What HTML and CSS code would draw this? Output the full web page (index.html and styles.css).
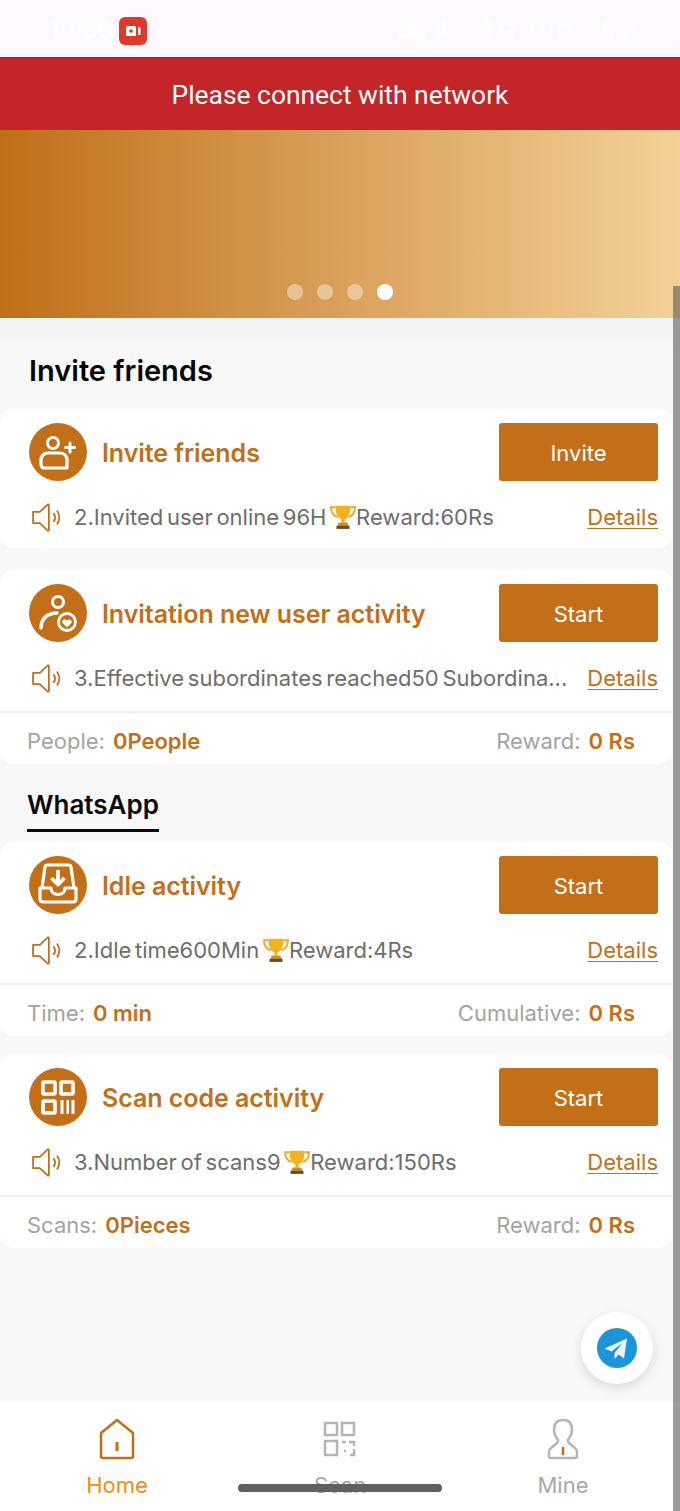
FILE: index.html
```html
<!DOCTYPE html>
<html lang="en">
<head>
<meta charset="utf-8">
<title>Invite friends</title>
<link rel="stylesheet" href="styles.css">
</head>
<body>
<svg class="defs" width="0" height="0" aria-hidden="true">
  <defs>
    <symbol id="spk" viewBox="0 0 30 30">
      <path d="M2 9.500h6.500L16 2.500c.7-.5 1.300-.2 1.300.6v23.800c0 .8-.6 1.100-1.300.6L8.500 20.500H2z" fill="none" stroke="#c36f17" stroke-width="1.700" stroke-linejoin="round"/>
      <path d="M22 11.500c1.600 2 1.600 5 0 7M25.500 9c2.400 3.500 2.400 8.500 0 12" fill="none" stroke="#c36f17" stroke-width="1.800" stroke-linecap="round"/>
    </symbol>
    <symbol id="cup" viewBox="0 0 24 24">
      <path d="M5 3H1c0 5 2 8 6 9M19 3h4c0 5-2 8-6 9" fill="none" stroke="#f2a81d" stroke-width="1.800"/>
      <path d="M5 1.500h14c0 7-2 11.500-5.500 12.500v3h-3v-3C7 13 5 8.500 5 1.500z" fill="#f7b11f"/>
      <path d="M8 17h8l1 3H7z" fill="#c98b1a"/>
      <path d="M6 20h12v3H6z" fill="#6e4a22"/>
    </symbol>
  </defs>
</svg>
<div class="screen">
  <header class="status">
    <div class="status-left">
      <span class="clock">10:00</span>
      <span class="rec"><svg viewBox="0 0 20 20" width="20" height="20"><rect x="3" y="5" width="10" height="10" rx="1.500" fill="#fff"/><circle cx="8" cy="10" r="1.800" fill="#e0392b"/><rect x="15" y="6" width="2.500" height="8" rx="1" fill="#fff"/></svg></span>
    </div>
    <div class="status-right">
      <svg viewBox="0 0 30 18" width="32" height="18"><path d="M1 17c0-4 3-6 6-6 1-5 5-9 9-9s7 4 8 8c3 0 5 3 5 7z" fill="#fff"/></svg>
      <span class="status-text">4G 5G 100 95%</span>
    </div>
  </header>
  <div class="alert">Please connect with network</div>
  <div class="banner">
    <div class="dots"><i class="dot"></i><i class="dot"></i><i class="dot"></i><i class="dot on"></i></div>
  </div>
  <main class="main">
    <h1 class="page-title">Invite friends</h1>

    <section class="card gap-22">
      <div class="head">
        <span class="badge">
          <svg viewBox="0 0 58 58" width="58" height="58"><circle cx="24" cy="20" r="5.500" fill="none" stroke="#fff" stroke-width="3"/><path d="M12 41v-4c0-4 3-7 7-7h11c5 0 8 3 8 7v8H15c-2 0-3-2-3-4z" fill="none" stroke="#fff" stroke-width="3.200" stroke-linejoin="round"/><path d="M41 20v9M36.500 24.500h9" stroke="#fff" stroke-width="3" stroke-linecap="round"/></svg>
        </span>
        <h2 class="name">Invite friends</h2>
        <button class="action">Invite</button>
      </div>
      <div class="info">
        <svg class="spk"><use href="#spk"/></svg>
        <p class="msg">2.Invited user online 96H <svg class="cup"><use href="#cup"/></svg>Reward:60Rs</p>
        <a class="details">Details</a>
      </div>
    </section>

    <section class="card">
      <div class="head">
        <span class="badge">
          <svg viewBox="0 0 58 58" width="58" height="58"><circle cx="29" cy="18" r="5.500" fill="none" stroke="#fff" stroke-width="3"/><path d="M12 44c0-9 6-15 16-15" fill="none" stroke="#fff" stroke-width="3.500" stroke-linecap="round"/><circle cx="38" cy="38" r="8.500" fill="none" stroke="#fff" stroke-width="2.800"/><path d="M38 43.500l-4.200-4.200c-2-2.600 2-5.600 4.200-2.600 2.200-3 6.200 0 4.200 2.600z" fill="#fff"/></svg>
        </span>
        <h2 class="name">Invitation new user activity</h2>
        <button class="action">Start</button>
      </div>
      <div class="info">
        <svg class="spk"><use href="#spk"/></svg>
        <p class="msg">3.Effective subordinates reached50 Subordina...</p>
        <a class="details">Details</a>
      </div>
      <div class="stats">
        <span class="stat"><span class="stat-label">People:</span><b class="stat-value">0People</b></span>
        <span class="stat"><span class="stat-label">Reward:</span><b class="stat-value">0 Rs</b></span>
      </div>
    </section>

    <div class="tabs"><span class="tab">WhatsApp</span></div>

    <section class="card gap-18">
      <div class="head">
        <span class="badge">
          <svg viewBox="0 0 58 58" width="58" height="58"><path d="M13 32l3-21c.2-1.500 1-2 2.500-2h21c1.500 0 2.300.5 2.500 2l3 21" fill="none" stroke="#fff" stroke-width="3.200"/><path d="M11 32h11c0 4 3 6.500 7 6.500s7-2.500 7-6.500h11v11c0 2-1 3-3 3H14c-2 0-3-1-3-3z" fill="none" stroke="#fff" stroke-width="3.200" stroke-linejoin="round"/><path d="M29 14v13M22.500 22l6.500 6.500 6.500-6.500" fill="none" stroke="#fff" stroke-width="3.800" stroke-linejoin="round"/></svg>
        </span>
        <h2 class="name">Idle activity</h2>
        <button class="action">Start</button>
      </div>
      <div class="info">
        <svg class="spk"><use href="#spk"/></svg>
        <p class="msg">2.Idle time600Min <svg class="cup"><use href="#cup"/></svg>Reward:4Rs</p>
        <a class="details">Details</a>
      </div>
      <div class="stats">
        <span class="stat"><span class="stat-label">Time:</span><b class="stat-value">0 min</b></span>
        <span class="stat"><span class="stat-label">Cumulative:</span><b class="stat-value">0 Rs</b></span>
      </div>
    </section>

    <section class="card">
      <div class="head">
        <span class="badge">
          <svg viewBox="0 0 58 58" width="58" height="58"><g fill="none" stroke="#fff" stroke-width="3.600"><rect x="14" y="14" width="12" height="12" rx="1"/><rect x="32" y="14" width="12" height="12" rx="1"/><rect x="14" y="33" width="12" height="12" rx="1"/></g><g fill="#fff"><rect x="31.500" y="32" width="3" height="14"/><rect x="37.500" y="32" width="2.500" height="14"/><rect x="42.500" y="32" width="3" height="14"/></g></svg>
        </span>
        <h2 class="name">Scan code activity</h2>
        <button class="action">Start</button>
      </div>
      <div class="info">
        <svg class="spk"><use href="#spk"/></svg>
        <p class="msg">3.Number of scans9 <svg class="cup"><use href="#cup"/></svg>Reward:150Rs</p>
        <a class="details">Details</a>
      </div>
      <div class="stats">
        <span class="stat"><span class="stat-label">Scans:</span><b class="stat-value">0Pieces</b></span>
        <span class="stat"><span class="stat-label">Reward:</span><b class="stat-value">0 Rs</b></span>
      </div>
    </section>
  </main>
  <nav class="nav">
    <a class="nav-item active">
      <svg viewBox="0 0 38 42" width="38" height="42"><path d="M3 15L19 2l16 13v23c0 1.500-.5 2-2 2H5c-1.500 0-2-.5-2-2z" fill="none" stroke="#c36f17" stroke-width="2.500" stroke-linejoin="round"/><path d="M19 24v9" stroke="#c36f17" stroke-width="3"/></svg>
      <span>Home</span>
    </a>
    <a class="nav-item">
      <svg viewBox="0 0 38 42" width="38" height="42"><g fill="none" stroke="#b5b5b5" stroke-width="2.500"><rect x="4" y="5" width="12" height="12"/><rect x="21" y="5" width="12" height="12"/><rect x="4" y="23" width="12" height="14"/><path d="M21 24h4M28 24h5v4M33 31v6h-4M23 33h2"/></g></svg>
      <span>Scan</span>
    </a>
    <a class="nav-item">
      <svg viewBox="0 0 38 42" width="38" height="42"><path d="M19 2c-6 0-9 4-9 10 0 5 2 7 3.500 9 .8 1 .8 3-.5 4l-6 5c-1.500 1-2 2-2 4v4c0 1.500.5 2 2 2h24c1.500 0 2-.5 2-2v-4c0-2-.5-3-2-4l-6-5c-1.300-1-1.300-3-.5-4C26 19 28 17 28 12c0-6-3-10-9-10z" fill="none" stroke="#b5b5b5" stroke-width="2.500" stroke-linejoin="round"/><path d="M19 29v8" stroke="#c36f17" stroke-width="2.500"/></svg>
      <span>Mine</span>
    </a>
  </nav>
  <div class="scrollbar"></div>
  <a class="fab">
    <svg viewBox="0 0 40 40" width="40" height="40"><circle cx="20" cy="20" r="20" fill="#1b95d8"/><path d="M30 10.500L7.500 20.500l7 3 11-8.500-8 10v6l4-4.500 5.500 4z" fill="#e8f5fc"/></svg>
  </a>
  <div class="home-bar"></div>
</div>
</body>
</html>
```
FILE: styles.css
```css
* { box-sizing: border-box; }
html, body { margin: 0; padding: 0; }
body { font-family: "Inter", "Noto Sans", sans-serif; background: #fff; }
.defs { position: absolute; }
.screen { position: relative; width: 680px; height: 1511px; overflow: hidden; display: flex; flex-direction: column; }

.status { height: 58px; background: #fdf9ff; border-bottom: 1px solid #b01c1c; display: flex; align-items: center; justify-content: space-between; padding: 5px 36px 0 50px; flex: none; }
.status-left, .status-right { display: flex; align-items: center; gap: 6px; }
.clock, .status-text { color: #fff; font-size: 23px; font-weight: 600; filter: blur(.8px); }
.status-text { letter-spacing: 2.800px; }
.rec { width: 28px; height: 28px; border-radius: 6px; background: #e0392b; display: flex; align-items: center; justify-content: center; }

.alert { height: 72px; flex: none; background: #c32528; color: #fff; font-family: "Roboto", sans-serif; font-size: 26.400px; display: flex; align-items: center; justify-content: center; padding-top: 1px; }
.banner { height: 188px; flex: none; background: linear-gradient(90deg, #bf6f17, #d9a05a 50%, #f3d197); display: flex; align-items: flex-end; justify-content: center; padding-bottom: 18px; }
.dots { display: flex; gap: 14px; }
.dot { width: 16px; height: 16px; border-radius: 50%; background: #fff; opacity: .4; }
.dot.on { opacity: 1; }

.main { flex: 1; background: linear-gradient(#f2f2f5, #f8f8f8 40px); }
.page-title { margin: 0; height: 91px; padding: 36px 0 0 29px; font-size: 29px; line-height: 34px; font-weight: 600; color: #050505; }
.card { width: 672px; background: #fff; border-radius: 14px; margin-bottom: 18px; }
.gap-22 { margin-bottom: 22px; }
.gap-18 { margin-bottom: 18px; }
.head { display: flex; align-items: center; padding: 14px 14px 0 29px; }
.badge { width: 58px; height: 58px; border-radius: 50%; background: #c36f17; flex: none; }
.badge svg { display: block; }
.name { margin: 0 0 0 15px; padding-top: 2px; flex: 1; font-size: 25px; font-weight: 600; color: #c36f17; letter-spacing: -.05px; white-space: nowrap; }
.action { width: 159px; height: 58px; border: 0; border-radius: 3px; padding: 1px 0 0; background: #c36f17; color: #fff; font-family: "Inter", sans-serif; font-size: 22px; flex: none; }

.info { display: flex; align-items: center; height: 67px; padding: 5px 14px 0 31px; }
.spk { width: 31px; height: 31px; flex: none; }
.msg { margin: 0 15px 0 12px; flex: 1; min-width: 0; font-size: 22px; word-spacing: -2.500px; color: #6d6d6d; white-space: nowrap; }
.cup { width: 26px; height: 26px; vertical-align: -5px; }
.details { font-size: 22px; color: #c36f17; text-decoration: underline; text-decoration-thickness: 1px; text-underline-offset: 3px; flex: none; }

.stats { display: flex; justify-content: space-between; align-items: center; height: 53px; margin-top: 2px; padding: 5px 37px 0 27px; border-top: 2px solid #eeeeee; }
.stat { display: flex; gap: 8px; font-size: 22px; }
.stat-label { color: #a3a3a3; }
.stat-value { color: #c36f17; font-weight: 600; }

.tabs { height: 56px; margin-top: 22px; padding-left: 27px; }
.tab { display: inline-block; height: 46px; font-size: 26px; line-height: 38px; font-weight: 600; color: #0a0a0a; border-bottom: 3px solid #0a0a0a; }

.nav { height: 109px; flex: none; background: #fff; display: grid; grid-template-columns: repeat(3, 1fr); padding: 16px 5.500px 0; }
.nav-item { display: flex; flex-direction: column; align-items: center; gap: 12px; font-size: 22px; color: #a8a8a8; }
.nav-item svg { display: block; }
.nav-item.active { color: #ef8c12; }

.scrollbar { position: absolute; top: 286px; right: 0; bottom: 0; width: 7px; background: rgba(90, 90, 90, .6); }
.fab { position: absolute; left: 581px; top: 1312px; width: 72px; height: 72px; border-radius: 50%; background: #fff; box-shadow: 0 4px 12px rgba(0, 0, 0, .12); display: flex; align-items: center; justify-content: center; }
.home-bar { position: absolute; left: 238px; top: 1484px; width: 204px; height: 8px; border-radius: 4px; background: #606060; }
```
